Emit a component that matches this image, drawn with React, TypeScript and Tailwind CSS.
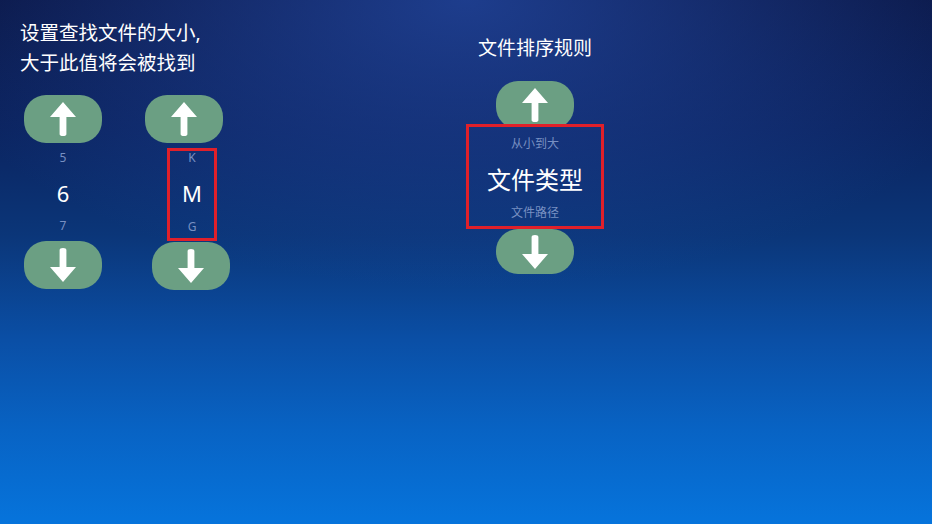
import React from "react"

const font = { fontFamily: '"Noto Sans", "Noto Sans CJK SC", sans-serif' }

function Arrow({ down = false }: { down?: boolean }) {
  return (
    <svg width="26" height="34" viewBox="0 0 26 34" className={down ? "rotate-180" : ""}>
      <path d="M13 0 L26 15 L16.4 15 L16.4 32 Q16.4 34 13 34 Q9.6 34 9.6 32 L9.6 15 L0 15 Z" fill="#ffffff" />
    </svg>
  )
}

function ArrowButton({ down = false, className = "h-[48px]" }: { down?: boolean; className?: string }) {
  return (
    <div className={`flex w-[78px] shrink-0 items-center justify-center rounded-[22px] bg-[#6b9f83] ${className}`}>
      <Arrow down={down} />
    </div>
  )
}

export default function App() {
  return (
    <div
      className="flex h-[524px] w-[932px] overflow-hidden bg-[radial-gradient(ellipse_60%_55%_at_50%_0%,rgba(36,74,165,0.75),rgba(36,74,165,0)_100%),linear-gradient(180deg,#0a1644_0%,#0b2460_25%,#0b3679_45%,#0a4fa6_65%,#0863c4_82%,#0674dc_100%)] text-white"
      style={font}
    >
      {/* file size */}
      <section className="flex w-[466px] shrink-0 flex-col pl-[20px] pt-[18px]">
        <p className="text-[19.5px] leading-[30px] text-white">
          设置查找文件的大小,
          <br />
          大于此值将会被找到
        </p>

        <div className="mt-[17px] flex pl-[4px]">
          {/* number column */}
          <div className="flex w-[78px] flex-col items-center">
            <ArrowButton />
            <span className="mt-[8px] text-[12px] leading-[14px] text-[#7890c2]">5</span>
            <span className="mt-[14px] text-[22px] leading-[28px]">6</span>
            <span className="mt-[12px] text-[12px] leading-[14px] text-[#7890c2]">7</span>
            <ArrowButton down className="mt-[8px] h-[48px]" />
          </div>

          {/* unit column */}
          <div className="ml-[43px] flex w-[85px] flex-col items-start">
            <ArrowButton />
            <div className="ml-[22px] mt-[5px] flex h-[93px] w-[50px] flex-col items-center border-[3px] border-[#e0202a]">
              <span className="text-[12px] leading-[14px] text-[#7890c2]">K</span>
              <span className="mt-[14px] text-[22px] leading-[28px]">M</span>
              <span className="mt-[13px] text-[12px] leading-[14px] text-[#7890c2]">G</span>
            </div>
            <ArrowButton down className="ml-[7px] mt-[1px] h-[48px]" />
          </div>
        </div>
      </section>

      {/* sort rule */}
      <section className="flex w-[138px] shrink-0 flex-col items-center pt-[35px]">
        <p className="text-[19px] leading-[26px]">文件排序规则</p>
        <div className="mt-[20px] h-[43px] overflow-hidden">
          <ArrowButton />
        </div>
        <div className="flex h-[105px] w-[138px] flex-col items-center border-[3px] border-[#e0202a] pt-[10px]">
          <span className="text-[12px] leading-[14px] text-[#7890c2]">从小到大</span>
          <span className="mt-[12px] text-[24px] leading-[34px]">文件类型</span>
          <span className="mt-[9px] text-[12px] leading-[14px] text-[#7890c2]">文件路径</span>
        </div>
        <ArrowButton down className="h-[45px]" />
      </section>
    </div>
  )
}
